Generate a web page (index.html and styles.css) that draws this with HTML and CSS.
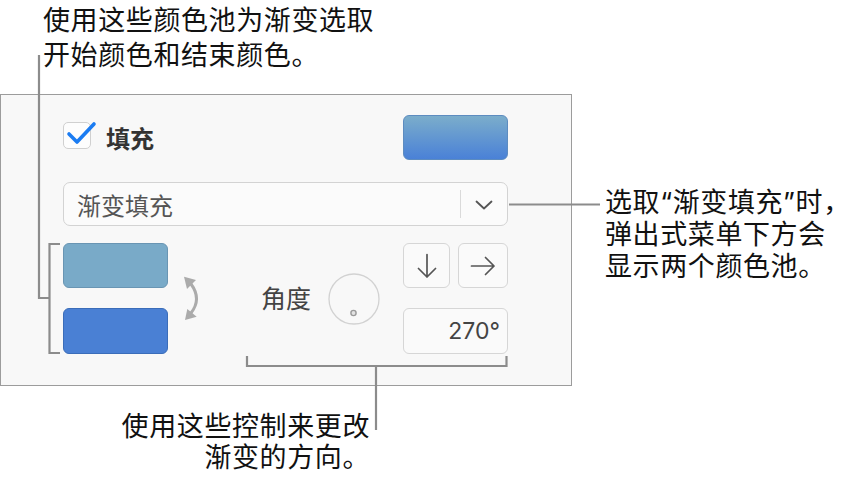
FILE: index.html
```html
<!DOCTYPE html>
<html lang="zh-CN">
<head>
<meta charset="utf-8">
<title>渐变填充</title>
<link rel="stylesheet" href="styles.css">
</head>
<body>
<div class="stage">
  <p class="note note-tl">使用这些颜色池为渐变选取<br>开始颜色和结束颜色。</p>

  <section class="panel">
    <div class="row-fill">
      <span class="checkbox">
        <svg class="tick" width="34" height="26" viewBox="0 0 34 26"><path d="M5 14 L13 22 L30 4" fill="none" stroke="#1b7cf2" stroke-width="3.6" stroke-linecap="round" stroke-linejoin="round"/></svg>
      </span>
      <span class="fill-label">填充</span>
      <span class="swatch swatch-gradient"></span>
    </div>

    <div class="popup">
      <span class="popup-text">渐变填充</span>
      <span class="popup-divider"></span>
      <span class="popup-chevron">
        <svg width="18" height="10" viewBox="0 0 18 10"><path d="M1.5 1.5 L9 8.5 L16.5 1.5" fill="none" stroke="#555" stroke-width="1.8" stroke-linecap="round" stroke-linejoin="round"/></svg>
      </span>
    </div>

    <div class="row-gradient">
      <div class="wells">
        <span class="swatch swatch-start"></span>
        <span class="swatch swatch-end"></span>
      </div>
      <svg class="swap" width="24" height="50" viewBox="0 0 24 50">
        <path d="M11 10 Q22 25 11 39" fill="none" stroke="#ababab" stroke-width="3"/>
        <path d="M4 2.7 L16 6 L7 15 Z" fill="#ababab"/>
        <path d="M5 46 L16.7 42.7 L7.3 35 Z" fill="#ababab"/>
      </svg>
      <span class="angle-label">角度</span>
      <svg class="dial" width="52" height="52" viewBox="0 0 52 52">
        <circle cx="26" cy="26" r="25" fill="none" stroke="#d2d2d2" stroke-width="1.3"/>
        <circle cx="25.5" cy="40" r="2.6" fill="#e2e2e2" stroke="#9a9a9a" stroke-width="1.4"/>
      </svg>
      <div class="direction">
        <div class="dir-buttons">
          <span class="btn">
            <svg width="20" height="26" viewBox="0 0 20 26"><path d="M10 1.5 V24 M1.5 15.5 L10 24 L18.5 15.5" fill="none" stroke="#555" stroke-width="1.7" stroke-linecap="round" stroke-linejoin="round"/></svg>
          </span>
          <span class="btn">
            <svg width="26" height="20" viewBox="0 0 26 20"><path d="M1.5 10 H24 M15.5 1.5 L24 10 L15.5 18.5" fill="none" stroke="#555" stroke-width="1.7" stroke-linecap="round" stroke-linejoin="round"/></svg>
          </span>
        </div>
        <div class="angle-field">270°</div>
      </div>
    </div>
  </section>

  <p class="note note-r">选取“渐变填充”时，<br>弹出式菜单下方会<br>显示两个颜色池。</p>
  <p class="note note-b">使用这些控制来更改<br>渐变的方向。</p>

  <svg class="leaders" width="865" height="484" viewBox="0 0 865 484">
    <g fill="none" stroke="#8c8c8c" stroke-width="2.2">
      <path d="M39 55 V298 H49"/>
      <path d="M60 244 H49.5 V353 H60"/>
      <path d="M509 204.5 H600"/>
      <path d="M247 356 V366 H506.5 V356"/>
      <path d="M376 366 V430"/>
    </g>
  </svg>
</div>
</body>
</html>
```

FILE: styles.css
```css
* {
  box-sizing: border-box;
}

html, body {
  margin: 0;
  padding: 0;
  background: #ffffff;
}

body {
  font-family: "Inter", "Noto Sans CJK SC", sans-serif;
  color: #111;
}

.stage {
  position: relative;
  width: 865px;
  height: 484px;
  padding-top: 94px;
  overflow: hidden;
}

/* callout labels */
.note {
  position: absolute;
  margin: 0;
  font-size: 27px;
  letter-spacing: 0.6px;
  color: #111;
  white-space: nowrap;
}

.note-tl {
  left: 43px;
  top: 3px;
  line-height: 35px;
}

.note-r {
  left: 605px;
  top: 187px;
  line-height: 32px;
}

.note-b {
  right: 495px;
  top: 411px;
  line-height: 31px;
  text-align: right;
}

.leaders {
  position: absolute;
  left: 0;
  top: 0;
  pointer-events: none;
}

/* inspector panel */
.panel {
  width: 572px;
  height: 292px;
  border: 1px solid #9c9c9c;
  background: #f8f8f8;
  padding: 20px 63px 0 62px;
}

.row-fill {
  display: flex;
  align-items: center;
  height: 45px;
}

.checkbox {
  position: relative;
  width: 28px;
  height: 27px;
  margin-top: -4px;
  border: 1px solid #d0d0d0;
  border-radius: 5px;
  background: #fdfdfd;
}

.tick {
  position: absolute;
  left: 0;
  top: -3px;
}

.fill-label {
  margin-left: 15px;
  font-size: 24px;
  font-weight: 700;
  color: #333;
}

.swatch {
  display: block;
  width: 105px;
  height: 45px;
  border-radius: 6px;
}

.swatch-gradient {
  margin-left: auto;
  background: linear-gradient(#7badcb, #4a81d7);
  border: 1px solid #5d8cc0;
}

.popup {
  display: flex;
  align-items: center;
  height: 44px;
  margin-top: 22px;
  border: 1px solid #d3d3d3;
  border-radius: 7px;
  background: #fbfbfb;
}

.popup-text {
  flex: 1;
  padding-left: 13px;
  font-size: 24px;
  color: #555;
}

.popup-divider {
  width: 1px;
  height: 28px;
  background: #dadada;
}

.popup-chevron {
  display: flex;
  align-items: center;
  justify-content: center;
  width: 46px;
  height: 100%;
  padding-top: 1px;
}

.row-gradient {
  display: flex;
  align-items: center;
  margin-top: 17px;
}

.wells {
  display: flex;
  flex-direction: column;
  gap: 20px;
}

.swatch-start {
  background: #79aac8;
  border: 1px solid #6995b3;
}

.swatch-end {
  height: 46px;
  background: #4a80d4;
  border: 1px solid #3b6db9;
}

.swap {
  margin-left: 12px;
}

.angle-label {
  margin-left: 57px;
  font-size: 25px;
  color: #444;
  padding-bottom: 4px;
}

.dial {
  margin-left: 17px;
}

.direction {
  margin-left: auto;
  display: flex;
  flex-direction: column;
  gap: 20px;
  width: 105px;
}

.dir-buttons {
  display: grid;
  grid-template-columns: 47px 50px;
  gap: 8px;
}

.btn {
  display: flex;
  align-items: center;
  justify-content: center;
  height: 45px;
  border: 1px solid #d6d6d6;
  border-radius: 6px;
  background: #fafafa;
}

.angle-field {
  height: 46px;
  border: 1px solid #d6d6d6;
  border-radius: 6px;
  background: #fafafa;
  padding-right: 7px;
  text-align: right;
  font-size: 23px;
  line-height: 44px;
  color: #444;
}
```
